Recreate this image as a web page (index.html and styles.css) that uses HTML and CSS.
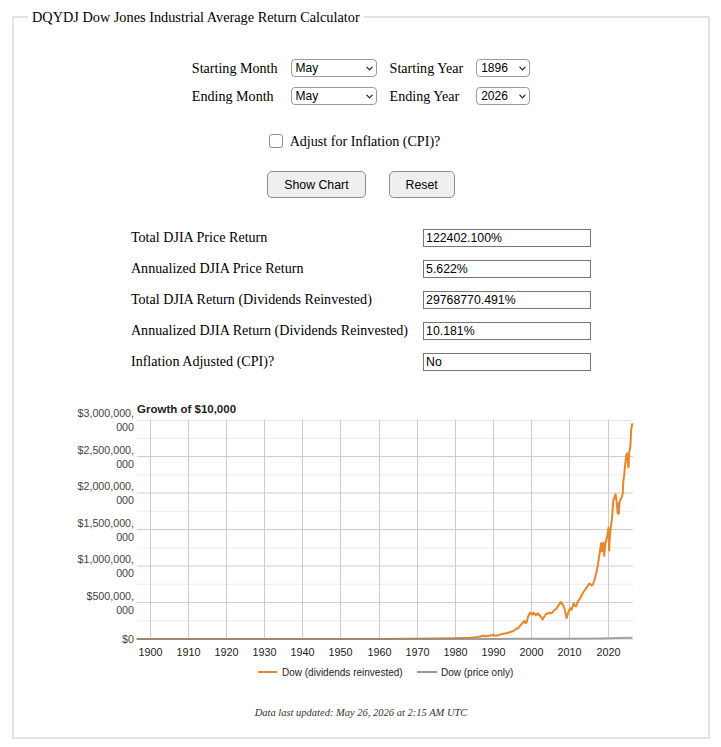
FILE: index.html
```html
<!DOCTYPE html>
<html lang="en">
<head>
<meta charset="utf-8">
<title>DQYDJ Dow Jones Industrial Average Return Calculator</title>
<link rel="stylesheet" href="styles.css">
</head>
<body>
<fieldset class="calc">
  <legend class="calc-title">DQYDJ Dow Jones Industrial Average Return Calculator</legend>

  <div class="period">
    <label class="field-label" for="sm">Starting Month</label>
    <span class="sel">
      <select id="sm">
        <option>January</option><option>February</option><option>March</option><option>April</option>
        <option selected>May</option><option>June</option><option>July</option><option>August</option>
        <option>September</option><option>October</option><option>November</option><option>December</option>
      </select>
      <svg class="chev" viewBox="0 0 8 5" width="8" height="5"><path d="M1 1 L4 4 L7 1"/></svg>
    </span>
    <label class="field-label" for="sy">Starting Year</label>
    <span class="sel">
      <select id="sy">
        <option selected>1896</option><option>1900</option><option>1950</option><option>2000</option><option>2026</option>
      </select>
      <svg class="chev" viewBox="0 0 8 5" width="8" height="5"><path d="M1 1 L4 4 L7 1"/></svg>
    </span>

    <label class="field-label" for="em">Ending Month</label>
    <span class="sel">
      <select id="em">
        <option>January</option><option>February</option><option>March</option><option>April</option>
        <option selected>May</option><option>June</option><option>July</option><option>August</option>
        <option>September</option><option>October</option><option>November</option><option>December</option>
      </select>
      <svg class="chev" viewBox="0 0 8 5" width="8" height="5"><path d="M1 1 L4 4 L7 1"/></svg>
    </span>
    <label class="field-label" for="ey">Ending Year</label>
    <span class="sel">
      <select id="ey">
        <option>1896</option><option>1900</option><option>1950</option><option>2000</option><option selected>2026</option>
      </select>
      <svg class="chev" viewBox="0 0 8 5" width="8" height="5"><path d="M1 1 L4 4 L7 1"/></svg>
    </span>
  </div>

  <div class="inflation">
    <input class="check" type="checkbox" id="cpi">
    <label class="field-label" for="cpi">Adjust for Inflation (CPI)?</label>
  </div>

  <div class="actions">
    <button class="btn" type="button">Show Chart</button>
    <button class="btn" type="button">Reset</button>
  </div>

  <div class="results">
    <span class="field-label">Total DJIA Price Return</span>
    <input class="out" type="text" value="122402.100%" readonly>
    <span class="field-label">Annualized DJIA Price Return</span>
    <input class="out" type="text" value="5.622%" readonly>
    <span class="field-label">Total DJIA Return (Dividends Reinvested)</span>
    <input class="out" type="text" value="29768770.491%" readonly>
    <span class="field-label">Annualized DJIA Return (Dividends Reinvested)</span>
    <input class="out" type="text" value="10.181%" readonly>
    <span class="field-label">Inflation Adjusted (CPI)?</span>
    <input class="out" type="text" value="No" readonly>
  </div>

  <div class="chart">
    <svg class="chart-svg" width="600" height="300" viewBox="61 397 600 300">
      <g class="minor">
        <line x1="137" x2="633" y1="620.75" y2="620.75"/>
        <line x1="137" x2="633" y1="584.25" y2="584.25"/>
        <line x1="137" x2="633" y1="547.75" y2="547.75"/>
        <line x1="137" x2="633" y1="511.25" y2="511.25"/>
        <line x1="137" x2="633" y1="474.75" y2="474.75"/>
        <line x1="137" x2="633" y1="438.25" y2="438.25"/>
      </g>
      <g class="major">
        <line x1="137" x2="633" y1="420.5" y2="420.5" class="top"/>
        <line x1="137" x2="633" y1="456.5" y2="456.5"/>
        <line x1="137" x2="633" y1="493" y2="493"/>
        <line x1="137" x2="633" y1="529.5" y2="529.5"/>
        <line x1="137" x2="633" y1="566" y2="566"/>
        <line x1="137" x2="633" y1="602.5" y2="602.5"/>
        <line x1="150.5" x2="150.5" y1="420" y2="639"/>
        <line x1="188.5" x2="188.5" y1="420" y2="639"/>
        <line x1="226.5" x2="226.5" y1="420" y2="639"/>
        <line x1="264.5" x2="264.5" y1="420" y2="639"/>
        <line x1="302.5" x2="302.5" y1="420" y2="639"/>
        <line x1="340.5" x2="340.5" y1="420" y2="639"/>
        <line x1="379.5" x2="379.5" y1="420" y2="639"/>
        <line x1="417.5" x2="417.5" y1="420" y2="639"/>
        <line x1="455.5" x2="455.5" y1="420" y2="639"/>
        <line x1="493.5" x2="493.5" y1="420" y2="639"/>
        <line x1="531.5" x2="531.5" y1="420" y2="639"/>
        <line x1="569.5" x2="569.5" y1="420" y2="639"/>
        <line x1="608.5" x2="608.5" y1="420" y2="639"/>
        <line x1="137" x2="633" y1="639" y2="639"/>
      </g>

      <text class="chart-title" x="137" y="413">Growth of $10,000</text>

      <g class="y-labels">
        <text x="134" y="417">$3,000,000,</text><text x="134" y="431">000</text>
        <text x="134" y="453.5">$2,500,000,</text><text x="134" y="467.5">000</text>
        <text x="134" y="490">$2,000,000,</text><text x="134" y="504">000</text>
        <text x="134" y="526.5">$1,500,000,</text><text x="134" y="540.5">000</text>
        <text x="134" y="563">$1,000,000,</text><text x="134" y="577">000</text>
        <text x="134" y="599.5">$500,000,</text><text x="134" y="613.5">000</text>
        <text x="134" y="643">$0</text>
      </g>

      <g class="x-labels">
        <text x="150.5" y="656">1900</text>
        <text x="188.5" y="656">1910</text>
        <text x="226.5" y="656">1920</text>
        <text x="264.5" y="656">1930</text>
        <text x="302.5" y="656">1940</text>
        <text x="340.5" y="656">1950</text>
        <text x="379.5" y="656">1960</text>
        <text x="417.5" y="656">1970</text>
        <text x="455.5" y="656">1980</text>
        <text x="493.5" y="656">1990</text>
        <text x="531.5" y="656">2000</text>
        <text x="569.5" y="656">2010</text>
        <text x="608.5" y="656">2020</text>
      </g>

      <polyline class="series-div" points="136.7,639 379.3,638.9 436.6,638.6 455.7,638.3 470,637.8 478,637 484.7,635.6 485.5,636.5 490,635.6 493.8,635.1 496,635.7 500,634.6 505.3,633.4 509,632.5 512.9,631.2 515,630 516.7,628.6 518.5,627.8 520.5,625.3 522.5,623 524.3,620.8 525.5,623.2 526.6,622.4 528.1,616.5 529,614.8 530,612.6 531,614.3 531.9,613.2 532.8,614.6 533.8,612.6 534.8,614 535.7,615.2 536.6,613.8 537.5,614.6 538.4,613.4 539.5,615.5 540.5,616 541.4,617.5 542.2,618.5 542.6,619.6 543.3,618 544.1,616.8 545.2,615.6 546.4,613.6 547.5,613.8 549.1,612.6 550.5,613.4 552.1,612.8 553.5,611 554.8,609.6 556.4,608.8 557.9,606.2 559.2,604.6 560.5,602 561.2,603.4 561.7,602.8 562.5,604.5 563.6,606 564.4,608.6 565.3,612 566,615.8 566.7,618 567.4,615.4 568.2,612.6 569.2,610.4 570.1,608.2 570.8,609.8 571.6,609.6 572.8,606 573.9,603.4 574.8,605.8 576.2,606.4 577,603.5 577.8,601.6 579.5,599.2 581.6,595.4 583.5,592 585.4,589.4 587.2,586.8 589.2,583.5 590.5,584.4 591.9,585.6 593.1,584 594,581.5 595,578 596,574 596.9,570.2 597.7,566 598.4,561.4 599.4,554.6 600.3,548.6 601,543.2 601.5,548 601.8,551.6 602.5,548 603.3,542.4 603.8,546 604.2,555.8 604.9,548.6 605.6,543.4 606.5,539 607.5,534.6 608,531 608.5,527.6 608.8,536 609.1,550.4 609.6,541 610.2,533.2 611,526 611.8,520.6 612.6,510 613.3,500.4 614.3,497.6 615,495.2 615.6,494.2 616.2,498 616.7,503 617.2,508 617.6,513.2 618,508 618.4,503.4 618.8,513.8 619.5,502.6 620.3,499.8 621.2,498.4 622,496.6 622.8,493.2 623.2,482.4 623.8,478 624.3,474.2 625,466 625.8,458.6 626.4,455 626.9,453.4 627.3,457 627.7,460.4 628.1,466 628.5,467.4 628.9,458 629.2,452.2 629.8,449 630.4,446.6 630.8,438 631.1,430.4 631.6,427 632,424.8 632.4,423.2"/>
      <polyline class="series-price" points="136.7,639 500,638.9 560,638.7 600,638.4 620,638.1 632.4,637.8"/>

      <g class="chart-legend">
        <line class="key-div" x1="258" x2="277" y1="672" y2="672"/>
        <text x="282" y="675.5">Dow (dividends reinvested)</text>
        <line class="key-price" x1="417" x2="437" y1="672" y2="672"/>
        <text x="441" y="675.5">Dow (price only)</text>
      </g>
    </svg>
  </div>

  <p class="updated">Data last updated: May 26, 2026 at 2:15 AM UTC</p>
</fieldset>
</body>
</html>
```

FILE: styles.css
```css
html, body {
  margin: 0;
  padding: 0;
  background: #fff;
}

body {
  font-family: "Liberation Serif", "Times New Roman", serif;
  font-size: 14px;
  color: #000;
}

.calc {
  margin: 9px 11px 8px 12px;
  padding: 0 0 14px;
  border: 2px solid #e3e3e3;
  min-width: 0;
}

.calc-title {
  margin-left: 14px;
  padding: 0 4px;
  font-size: 14.3px;
  line-height: 16px;
}

.field-label {
  font-family: "Liberation Serif", "Times New Roman", serif;
  font-size: 14.1px;
  white-space: nowrap;
}

/* period selectors */
.period {
  margin-top: 29px;
  display: grid;
  grid-template-columns: auto 86px auto 54px;
  grid-auto-rows: 28px;
  column-gap: 13px;
  align-items: center;
  justify-content: center;
}

.sel {
  position: relative;
  display: block;
  height: 18px;
}

.sel select {
  appearance: none;
  -webkit-appearance: none;
  display: block;
  width: 100%;
  height: 18px;
  margin: 0;
  padding: 0 14px 0 4px;
  border: 1px solid #9b9b9b;
  border-radius: 4px;
  background: #fff;
  color: #000;
  font-family: "Liberation Sans", Arial, sans-serif;
  font-size: 12px;
  line-height: 16px;
}

.chev {
  position: absolute;
  right: 4px;
  top: 7px;
  width: 7px;
  height: 5px;
  fill: none;
  stroke: #222;
  stroke-width: 1.4;
  stroke-linecap: round;
  stroke-linejoin: round;
  pointer-events: none;
}

/* inflation checkbox */
.inflation {
  margin-top: 21px;
  height: 20px;
  display: flex;
  align-items: center;
  justify-content: center;
  gap: 7px;
  padding-right: 13px;
}

.check {
  appearance: none;
  -webkit-appearance: none;
  margin: 0;
  width: 14px;
  height: 14px;
  border: 1px solid #8d8d8d;
  border-radius: 3px;
  background: #fff;
}

/* buttons */
.actions {
  margin-top: 20px;
  display: flex;
  justify-content: center;
  gap: 23px;
}

.btn {
  height: 27px;
  margin: 0;
  padding: 0 16px;
  border: 1px solid #8e8e8e;
  border-radius: 5px;
  background: #efeff0;
  color: #000;
  font-family: "Liberation Sans", Arial, sans-serif;
  font-size: 12.3px;
}

/* results */
.results {
  margin-top: 31px;
  display: grid;
  grid-template-columns: auto 168px;
  grid-auto-rows: 18px;
  column-gap: 15px;
  row-gap: 13px;
  align-items: center;
  justify-content: center;
}

.results .field-label {
  position: relative;
  top: -1px;
}

.out {
  box-sizing: border-box;
  width: 168px;
  height: 18px;
  margin: 0;
  padding: 0 2px;
  border: 1px solid #767676;
  border-radius: 0;
  background: #fff;
  color: #000;
  font-family: "Liberation Sans", Arial, sans-serif;
  font-size: 12.3px;
}

/* chart */
.chart {
  margin-top: 26px;
  display: flex;
  justify-content: center;
}

.chart-svg {
  display: block;
  font-family: "Liberation Sans", Arial, sans-serif;
}

.minor line {
  stroke: #ececec;
  stroke-width: 1;
}

.major line {
  stroke: #cccccc;
  stroke-width: 1;
}

.major line.top {
  stroke: #e2e2e2;
}

.chart-title {
  font-size: 11.5px;
  font-weight: bold;
  fill: #222;
}

.y-labels text {
  font-size: 10.7px;
  fill: #444;
  text-anchor: end;
}

.x-labels text {
  font-size: 10.8px;
  fill: #222;
  text-anchor: middle;
}

.series-div {
  fill: none;
  stroke: #e8862a;
  stroke-width: 2;
  stroke-linejoin: round;
}

.series-price {
  fill: none;
  stroke: #888888;
  stroke-width: 2;
  stroke-opacity: 0.75;
}

.chart-legend text {
  font-size: 10px;
  fill: #222;
}

.key-div {
  stroke: #e8862a;
  stroke-width: 2;
}

.key-price {
  stroke: #999999;
  stroke-width: 2;
}

.updated {
  margin: 9px 0 0;
  text-align: center;
  font-style: italic;
  font-size: 10.5px;
  line-height: 14px;
  color: #333;
}

.calc > .updated {
  padding-bottom: 3px;
}
```
